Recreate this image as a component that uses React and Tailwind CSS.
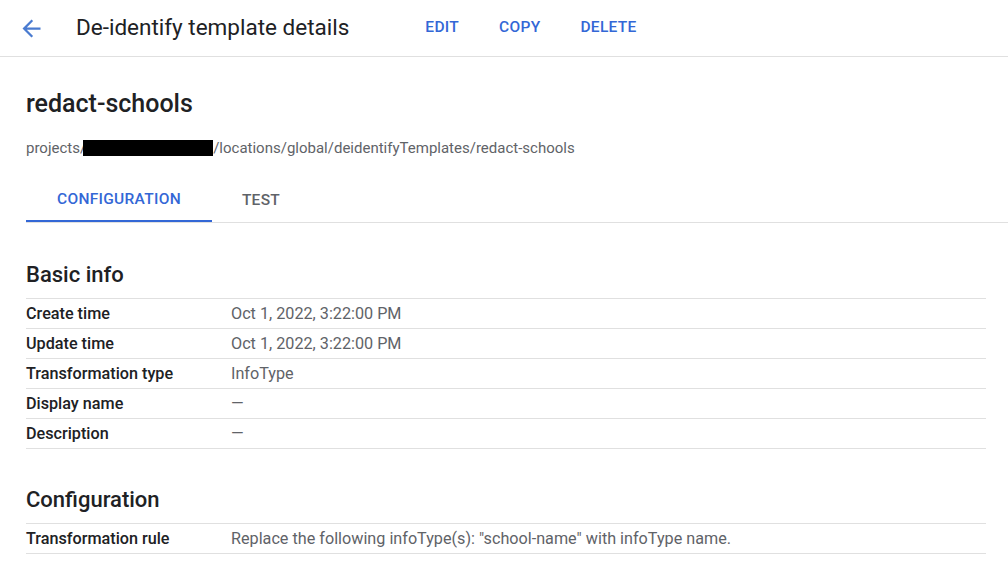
import React from "react";

const basicInfo = [
  { label: "Create time", value: "Oct 1, 2022, 3:22:00 PM" },
  { label: "Update time", value: "Oct 1, 2022, 3:22:00 PM" },
  { label: "Transformation type", value: "InfoType" },
  { label: "Display name", value: "—" },
  { label: "Description", value: "—" },
];

const configRows = [
  {
    label: "Transformation rule",
    value: 'Replace the following infoType(s): "school-name" with infoType name.',
  },
];

const DetailTable = ({ rows }) => (
  <div className="border-t border-[#e0e0e0]">
    {rows.map((row) => (
      <div key={row.label} className="flex h-[30px] items-center border-b border-[#e0e0e0] pt-[2px] text-[16.2px]">
        <div className="w-[205px] shrink-0 font-medium text-[#202124]">{row.label}</div>
        <div className="text-[#5f6368]">{row.value}</div>
      </div>
    ))}
  </div>
);

export default function App() {
  return (
    <div className="min-h-[571px] bg-white font-['Roboto',sans-serif] text-[#202124]">
      {/* Top bar */}
      <header className="flex h-[57px] items-center border-b border-[#e0e0e0]">
        <button className="ml-[18px] flex h-[27px] w-[27px] items-center justify-center text-[#4a7bd0]">
          <svg width="27" height="27" viewBox="0 0 24 24" fill="currentColor">
            <path d="M20 11H7.83l5.59-5.59L12 4l-8 8 8 8 1.41-1.41L7.83 13H20v-2z" />
          </svg>
        </button>
        <h1 className="ml-[31px] text-[22.5px] text-[#202124]">De-identify template details</h1>
        <div className="ml-[56px] flex text-[15.5px] font-medium tracking-[0.3px] text-[#3367d6]">
          <button className="px-5">EDIT</button>
          <button className="px-5">COPY</button>
          <button className="px-5">DELETE</button>
        </div>
      </header>

      {/* Title block */}
      <div className="px-[26px] pt-[31px]">
        <h2 className="text-[25px] leading-8 font-medium">redact-schools</h2>
        <div className="mt-[18px] flex items-center text-[15px] leading-5 text-[#5f6368]">
          <span>projects/</span>
          <span className="-ml-[3px] inline-block h-4 w-[130px] bg-black" />
          <span>/locations/global/deidentifyTemplates/redact-schools</span>
        </div>
      </div>

      {/* Tabs */}
      <div className="mt-[16px] ml-[26px] flex border-b border-[#e0e0e0]">
        <div className="flex h-12 w-[186px] items-center justify-center border-b-2 border-[#3367d6] pt-[5px] text-[15.5px] font-medium tracking-[0.3px] text-[#3367d6]">
          CONFIGURATION
        </div>
        <div className="flex h-12 w-[98px] items-center justify-center pt-[5px] text-[15.5px] font-medium tracking-[0.3px] text-[#5f6368]">
          TEST
        </div>
      </div>

      {/* Sections */}
      <div className="pr-[22px] pl-[26px]">
        <h3 className="mt-[38px] mb-[9px] text-[22px] leading-7 font-medium">Basic info</h3>
        <DetailTable rows={basicInfo} />

        <h3 className="mt-[37px] mb-[9px] text-[22px] leading-7 font-medium">Configuration</h3>
        <DetailTable rows={configRows} />
      </div>
    </div>
  );
}
